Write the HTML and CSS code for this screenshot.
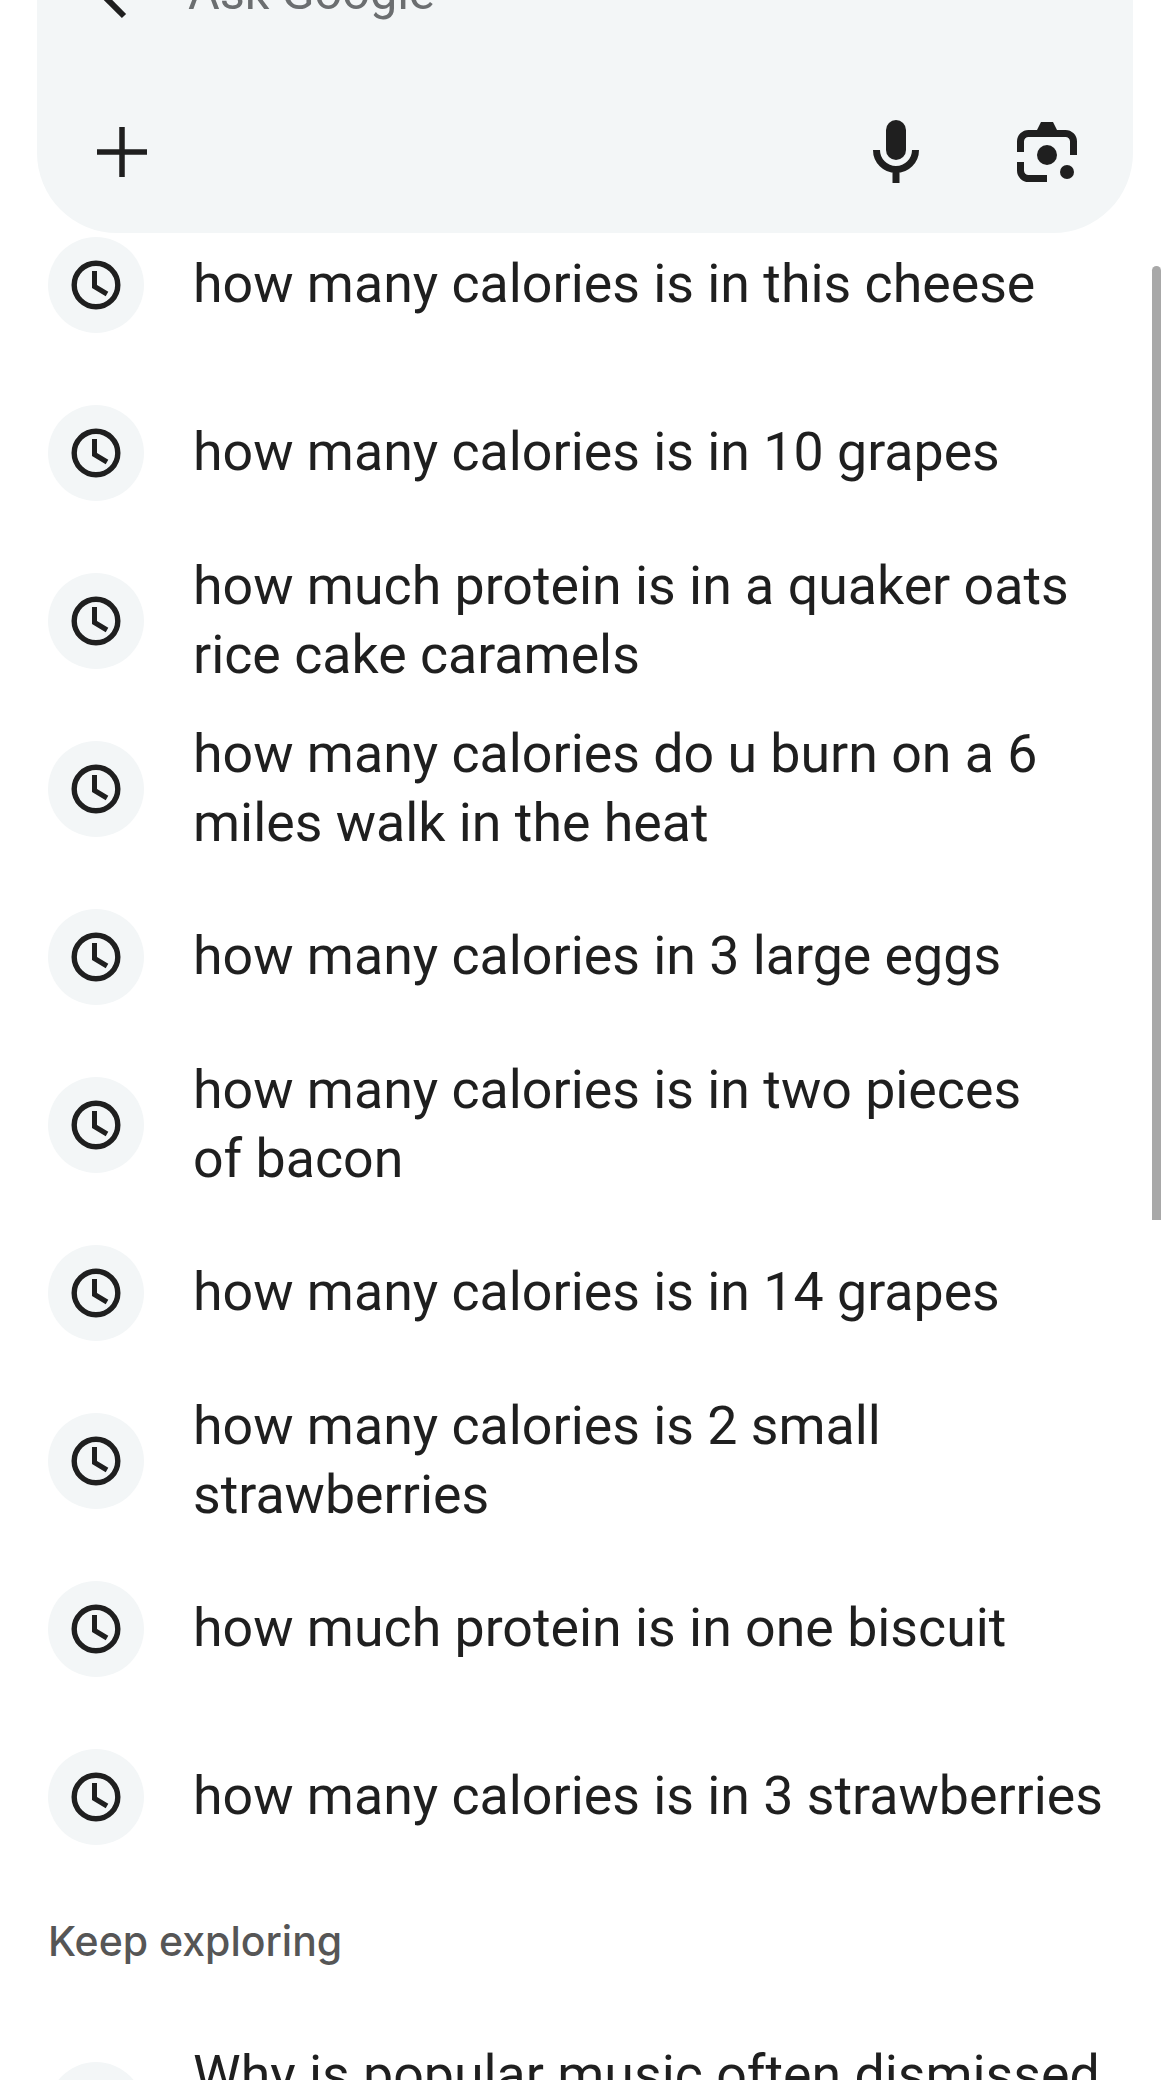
FILE: index.html
```html
<!DOCTYPE html>
<html lang="en">
  <head>
    <meta charset="utf-8" />
    <title>Ask Google</title>
    <link rel="stylesheet" href="styles.css">
  </head>
  <body>
    <svg class="defs" width="0" height="0">
      <symbol id="clock" viewBox="0 0 50 50">
        <circle cx="25" cy="25" r="21.8" fill="none" stroke="currentColor" stroke-width="5.4" />
        <path d="M23.5 11V26.5L36 34" fill="none" stroke="currentColor" stroke-width="5" />
      </symbol>
    </svg>

    <header class="search">
      <div class="search-row">
        <svg class="back" width="48" height="60" viewBox="0 0 48 60">
          <path d="M4 22L36 54" fill="none" stroke="#1f1f1f" stroke-width="6" />
        </svg>
        <span class="placeholder">Ask Google</span>
      </div>
      <div class="toolbar">
        <svg class="plus" width="50" height="50" viewBox="0 0 50 50">
          <path d="M25 0V50M0 25H50" fill="none" stroke="#1f1f1f" stroke-width="5.5" />
        </svg>
        <svg class="mic" width="46" height="63" viewBox="0 0 46 63">
          <rect x="13" y="0" width="20" height="40" rx="10" fill="#1f1f1f" />
          <path d="M3.5 30A19.5 19.5 0 0 0 42.5 30M23 48V63" fill="none" stroke="#1f1f1f" stroke-width="7" />
        </svg>
        <svg class="lens" width="60" height="60" viewBox="0 0 60 60">
          <path d="M3.5 30V19.5a8 8 0 0 1 8-8H48.5a8 8 0 0 1 8 8V33M3.5 40V48.5a8 8 0 0 0 8 8H30" fill="none" stroke="#1f1f1f" stroke-width="7" />
          <path d="M20 8L24 0H36L40 8Z" fill="#1f1f1f" />
          <circle cx="30" cy="33" r="10" fill="#1f1f1f" />
          <circle cx="50" cy="50" r="7" fill="#1f1f1f" />
        </svg>
      </div>
    </header>

    <ul class="history">
      <li class="row">
        <span class="row-icon"><svg width="50" height="50"><use href="#clock" /></svg></span>
        <span class="row-text">how many calories is in this cheese</span>
      </li>
      <li class="row">
        <span class="row-icon"><svg width="50" height="50"><use href="#clock" /></svg></span>
        <span class="row-text">how many calories is in 10 grapes</span>
      </li>
      <li class="row">
        <span class="row-icon"><svg width="50" height="50"><use href="#clock" /></svg></span>
        <span class="row-text">how much protein is in a quaker oats rice cake caramels</span>
      </li>
      <li class="row">
        <span class="row-icon"><svg width="50" height="50"><use href="#clock" /></svg></span>
        <span class="row-text">how many calories do u burn on a 6 miles walk in the heat</span>
      </li>
      <li class="row">
        <span class="row-icon"><svg width="50" height="50"><use href="#clock" /></svg></span>
        <span class="row-text">how many calories in 3 large eggs</span>
      </li>
      <li class="row">
        <span class="row-icon"><svg width="50" height="50"><use href="#clock" /></svg></span>
        <span class="row-text">how many calories is in two pieces<br>of bacon</span>
      </li>
      <li class="row">
        <span class="row-icon"><svg width="50" height="50"><use href="#clock" /></svg></span>
        <span class="row-text">how many calories is in 14 grapes</span>
      </li>
      <li class="row">
        <span class="row-icon"><svg width="50" height="50"><use href="#clock" /></svg></span>
        <span class="row-text">how many calories is 2 small strawberries</span>
      </li>
      <li class="row">
        <span class="row-icon"><svg width="50" height="50"><use href="#clock" /></svg></span>
        <span class="row-text">how much protein is in one biscuit</span>
      </li>
      <li class="row">
        <span class="row-icon"><svg width="50" height="50"><use href="#clock" /></svg></span>
        <span class="row-text">how many calories is in 3 strawberries</span>
      </li>
    </ul>

    <h2 class="section-title">Keep exploring</h2>

    <ul class="history">
      <li class="row">
        <span class="row-icon"></span>
        <span class="row-text">Why is popular music often dismissed as shallow</span>
      </li>
    </ul>

    <div class="scrollbar"></div>
  </body>
</html>
```

FILE: styles.css
```css
html, body {
  height: 2080px;
  overflow: hidden;
}

body {
  margin: 0;
  background: white;
  color: #1f1f1f;
  font-family: Roboto, sans-serif;
  position: relative;
}

.defs {
  position: absolute;
}

.search {
  position: relative;
  z-index: 1;
  height: 233px;
  margin: 0 37px;
  padding-bottom: 50px;
  box-sizing: border-box;
  display: flex;
  flex-direction: column;
  justify-content: space-between;
  background: #f3f6f7;
  border-radius: 0 0 80px 80px;
}

.search-row {
  display: flex;
  align-items: center;
  gap: 52px;
  height: 60px;
  margin-top: -38px;
  padding-left: 51px;
}

.placeholder {
  font-size: 48.6px;
  color: #6b6e70;
}

.toolbar {
  display: flex;
  align-items: center;
  padding: 0 56px 0 60px;
}

.plus {
  margin-right: auto;
}

.lens {
  margin-left: 98px;
}

.history {
  list-style: none;
  margin: -32px 0 0;
  padding: 0;
}

.row {
  display: flex;
  align-items: center;
  gap: 49px;
  height: 168px;
  padding: 0 40px 0 48px;
}

.row-icon {
  flex: none;
  width: 96px;
  height: 96px;
  display: flex;
  align-items: center;
  justify-content: center;
  border-radius: 50%;
  background: #f3f6f7;
}

.row-text {
  font-size: 53.7px;
  line-height: 69px;
  margin-bottom: 3px;
}

.section-title {
  margin: 32px 0 0 48px;
  font-family: Inter, sans-serif;
  font-size: 41px;
  line-height: 56px;
  font-weight: 500;
  color: #565656;
}

.section-title + .history {
  margin-top: 57px;
}

.scrollbar {
  position: absolute;
  top: 266px;
  left: 1152px;
  width: 9px;
  height: 954px;
  border-radius: 5px 5px 0 0;
  background: #a8a8a8;
}
```
